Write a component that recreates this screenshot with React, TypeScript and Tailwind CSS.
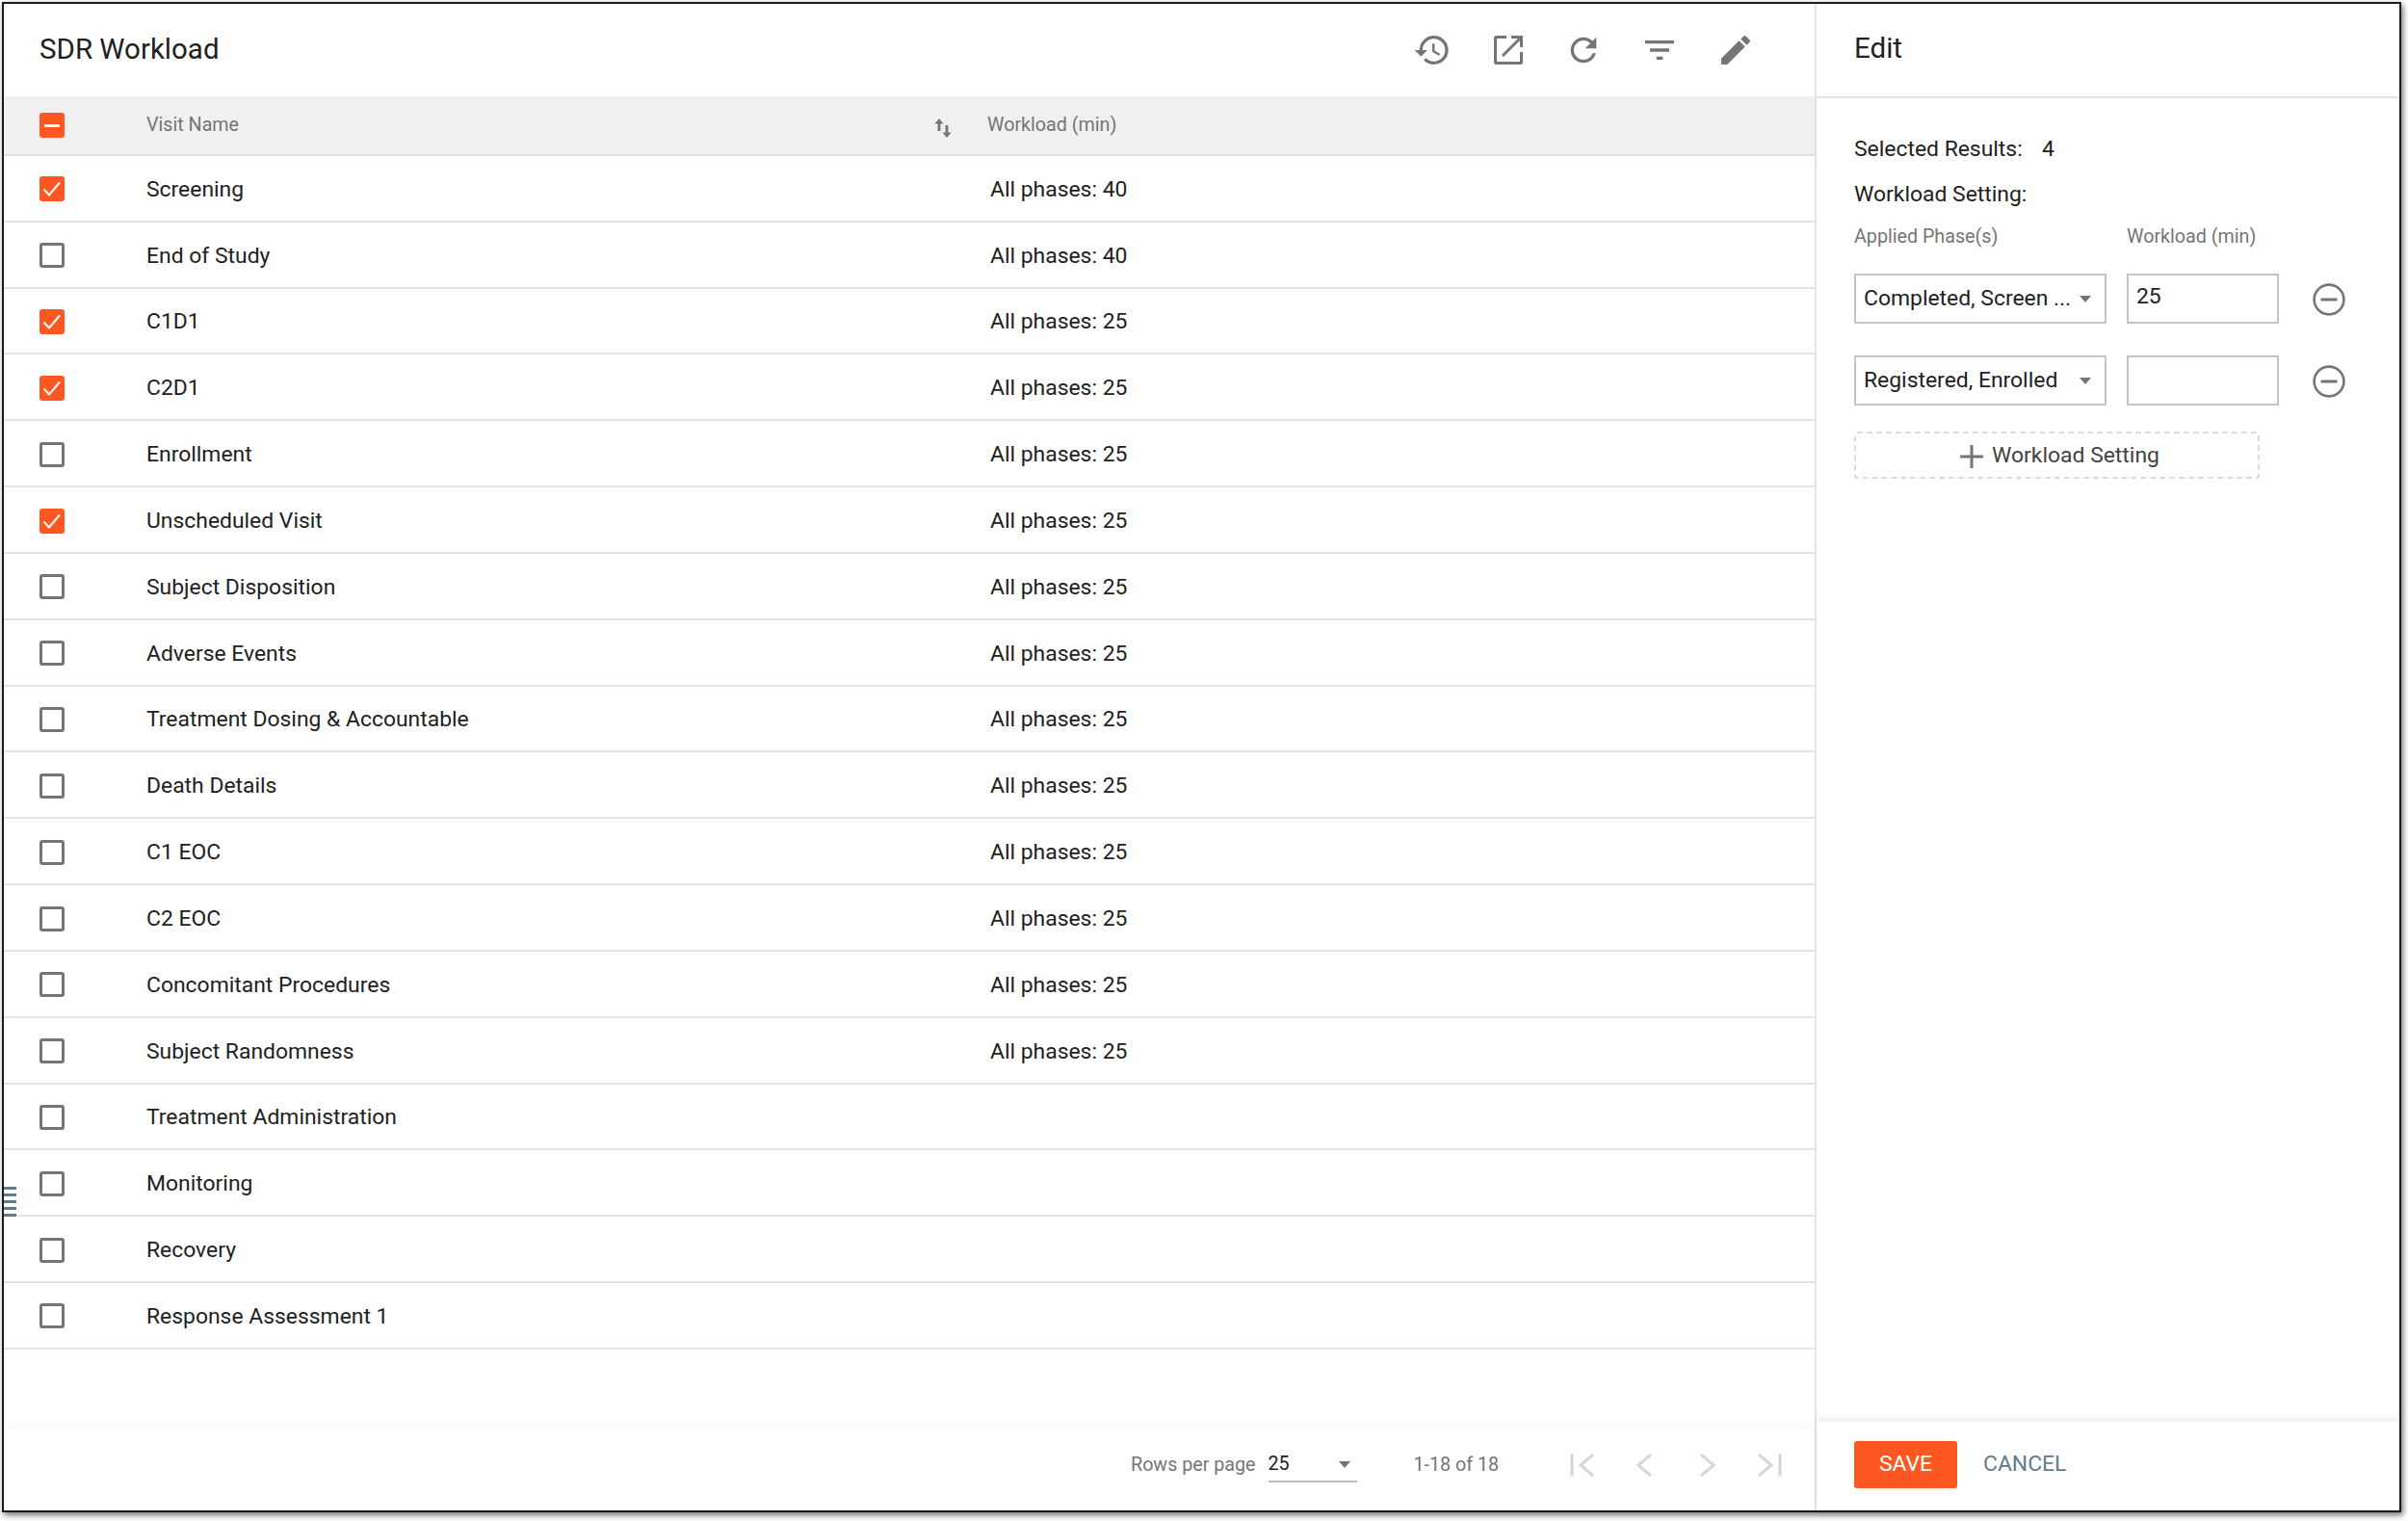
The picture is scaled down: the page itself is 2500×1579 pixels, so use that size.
import { MdEdit, MdFilterList, MdHistory, MdRefresh } from "react-icons/md";

const rows = [
  { name: "Screening", value: "All phases: 40", checked: true },
  { name: "End of Study", value: "All phases: 40" },
  { name: "C1D1", value: "All phases: 25", checked: true },
  { name: "C2D1", value: "All phases: 25", checked: true },
  { name: "Enrollment", value: "All phases: 25" },
  { name: "Unscheduled Visit", value: "All phases: 25", checked: true },
  { name: "Subject Disposition", value: "All phases: 25" },
  { name: "Adverse Events", value: "All phases: 25" },
  { name: "Treatment Dosing & Accountable", value: "All phases: 25" },
  { name: "Death Details", value: "All phases: 25" },
  { name: "C1 EOC", value: "All phases: 25" },
  { name: "C2 EOC", value: "All phases: 25" },
  { name: "Concomitant Procedures", value: "All phases: 25" },
  { name: "Subject Randomness", value: "All phases: 25" },
  { name: "Treatment Administration" },
  { name: "Monitoring" },
  { name: "Recovery" },
  { name: "Response Assessment 1" },
];

const pagerIcons = [
  "M2 0.5v23M24 1L11 12l13 11",
  "M19 1L6 12l13 11",
  "M6 1l13 11L6 23",
  "M1 1l13 11L1 23M23 0.5v23",
];

function Checkbox({ state }: { state?: "checked" | "mixed" }) {
  if (!state) {
    return <span className="block h-[26px] w-[26px] rounded-[3px] border-[3px] border-[#757575] bg-white" />;
  }
  return (
    <span className="grid h-[26px] w-[26px] place-items-center rounded-[3px] bg-[#ff5722]">
      {state === "checked" ? (
        <svg viewBox="0 0 26 26" className="h-[26px] w-[26px]" fill="none" stroke="white" strokeWidth="2">
          <path d="M4.5 13.5l5.5 6L21 6.5" />
        </svg>
      ) : (
        <span className="block h-[3px] w-[16px] bg-white" />
      )}
    </span>
  );
}

function LaunchIcon() {
  return (
    <svg viewBox="0 0 30 30" className="h-[30px] w-[30px]" fill="none" stroke="#757575" strokeWidth="3">
      <path d="M13 1.5H2.5a1 1 0 0 0-1 1v25a1 1 0 0 0 1 1h25a1 1 0 0 0 1-1V17" />
      <path d="M18 1.5h10.5V12" />
      <path d="M28 2L9 21" />
    </svg>
  );
}

function SortIcon() {
  return (
    <svg viewBox="0 0 18 20" className="h-[20px] w-[18px]" fill="#757575">
      <path d="M5 0l4.5 5.5H6.4V13H3.6V5.5H.5z" />
      <path d="M13 20l-4.5-5.5h3.1V7h2.8v7.5h3.1z" />
    </svg>
  );
}

function MinusCircle() {
  return (
    <svg viewBox="0 0 34 34" className="h-[34px] w-[34px]" fill="none" stroke="#757575" strokeWidth="2.6">
      <circle cx="17" cy="17" r="15.4" />
      <path d="M8.5 17h17" strokeWidth="3" />
    </svg>
  );
}

function PhaseRow({ phase, workload }: { phase: string; workload: string }) {
  return (
    <div className="flex h-[52px] items-center">
      <div className="flex h-full w-[262px] items-center justify-between border-2 border-[#c4c4c4] pl-[8px] pr-[14px]">
        <span className="text-[22.9px] text-[#212121]">{phase}</span>
        <span className="h-0 w-0 border-x-[6px] border-t-[7px] border-x-transparent border-t-[#757575]" />
      </div>
      <input
        readOnly
        value={workload}
        className="ml-[21px] h-full w-[158px] border-2 border-[#c4c4c4] pb-[5px] pl-[8px] text-[22.9px] text-[#212121] outline-none"
      />
      <span className="ml-[35px] mt-[2px]">
        <MinusCircle />
      </span>
    </div>
  );
}

export default function App() {
  return (
    <div className="h-[1579px] w-[2500px] overflow-hidden bg-white pl-[2px] pt-[2px] font-['Roboto',sans-serif] text-[#212121]">
      <div className="relative flex h-[1568px] w-[2491px] border-2 border-[#1c1c1c] bg-white shadow-[2px_3px_6px_rgba(0,0,0,0.55)]">
        <div className="flex w-[1882px] flex-col border-r-2 border-[#e4e4e4]">
          <header className="flex h-[96px] shrink-0 items-center justify-between pl-[37px] pr-[62.5px]">
            <h1 className="text-[29.5px] leading-none text-[#212121]">SDR Workload</h1>
            <div className="flex items-center gap-[38.6px] text-[#757575]">
              <MdHistory size={40} />
              <span className="grid h-[40px] w-[40px] place-items-center">
                <LaunchIcon />
              </span>
              <MdRefresh size={40} />
              <MdFilterList size={40} />
              <MdEdit size={40} />
            </div>
          </header>

          <div className="flex h-[62px] shrink-0 items-center border-b-2 border-[#e0e0e0] bg-[#f0f0f0] pl-[37px] text-[19.7px] text-[#757575]">
            <Checkbox state="mixed" />
            <span className="ml-[85px] w-[818px]">Visit Name</span>
            <span className="mt-[6px] w-[55px]">
              <SortIcon />
            </span>
            <span>Workload (min)</span>
          </div>

          <div className="flex-1">
            {rows.map((row) => (
              <div
                key={row.name}
                className="flex h-[68.83px] items-center border-b-2 border-[#e4e4e4] pl-[37px] pt-[2px] text-[22.9px]"
              >
                <Checkbox state={row.checked ? "checked" : undefined} />
                <span className="ml-[85px] mt-[1px] w-[876px]">{row.name}</span>
                {row.value && <span className="mt-[1px]">{row.value}</span>}
              </div>
            ))}
          </div>

          <footer className="flex h-[85px] shrink-0 items-center pb-[9px] pr-[34px] text-[19.7px] text-[#757575] shadow-[0_-6px_10px_rgba(0,0,0,0.025)]">
            <span className="ml-[1170px]">Rows per page</span>
            <div className="ml-[13px] flex h-[36px] w-[92px] items-center justify-between border-b-2 border-[#bdbdbd] pr-[7px]">
              <span className="text-[#212121]">25</span>
              <span className="h-0 w-0 border-x-[6.5px] border-t-[7px] border-x-transparent border-t-[#757575]" />
            </div>
            <span className="ml-[59px]">1-18 of 18</span>
            <div className="ml-auto flex items-center gap-[40px]">
              {pagerIcons.map((d) => (
                <svg key={d} viewBox="0 0 25 24" className="h-[24px] w-[25px]" fill="none" stroke="#d8d8d8" strokeWidth="3.2">
                  <path d={d} />
                </svg>
              ))}
            </div>
          </footer>
        </div>

        <aside className="flex flex-1 flex-col">
          <header className="flex h-[98px] shrink-0 items-center border-b-2 border-[#e4e4e4] pb-[2px] pl-[39px]">
            <h2 className="text-[29.5px] leading-none">Edit</h2>
          </header>

          <div className="flex-1 pl-[39px] pt-[38px] text-[22.9px]">
            <div className="flex h-[30px] items-center">
              <span className="w-[195px]">Selected Results:</span>
              <span>4</span>
            </div>
            <div className="mt-[17px] flex h-[30px] items-center">Workload Setting:</div>
            <div className="mt-[16px] flex h-[26px] items-center text-[19.7px] text-[#757575]">
              <span className="w-[283px]">Applied Phase(s)</span>
              <span>Workload (min)</span>
            </div>
            <div className="mt-[25px] flex flex-col gap-[33px]">
              <PhaseRow phase="Completed, Screen ..." workload="25" />
              <PhaseRow phase="Registered, Enrolled" workload="" />
            </div>
            <button className="mt-[27px] flex h-[49px] w-[421px] items-center justify-center gap-[9px] rounded-[3px] border-2 border-dashed border-[#dcdcdc] pl-[6px] pt-[2px] text-[#424242]">
              <svg viewBox="0 0 24 24" className="h-[24px] w-[24px]" stroke="#757575" strokeWidth="3">
                <path d="M12 0v24M0 12h24" />
              </svg>
              Workload Setting
            </button>
          </div>

          <footer className="flex h-[92px] shrink-0 items-start pl-[39px] pt-[20px] shadow-[0_-4px_6px_rgba(0,0,0,0.07)]">
            <button className="h-[49px] w-[107px] rounded-[3px] bg-[#ff5722] text-[22.9px] text-white">SAVE</button>
            <button className="ml-[27px] h-[49px] text-[22.9px] text-[#607d8b]">CANCEL</button>
          </footer>
        </aside>

        <div className="absolute left-0 top-[1228px] flex w-[13px] flex-col gap-[4px]">
          <span className="block h-[3px] bg-[#607d8b]" />
          <span className="block h-[3px] bg-[#607d8b]" />
          <span className="block h-[3px] bg-[#607d8b]" />
          <span className="block h-[3px] bg-[#607d8b]" />
          <span className="block h-[3px] bg-[#607d8b]" />
        </div>
      </div>
    </div>
  );
}
